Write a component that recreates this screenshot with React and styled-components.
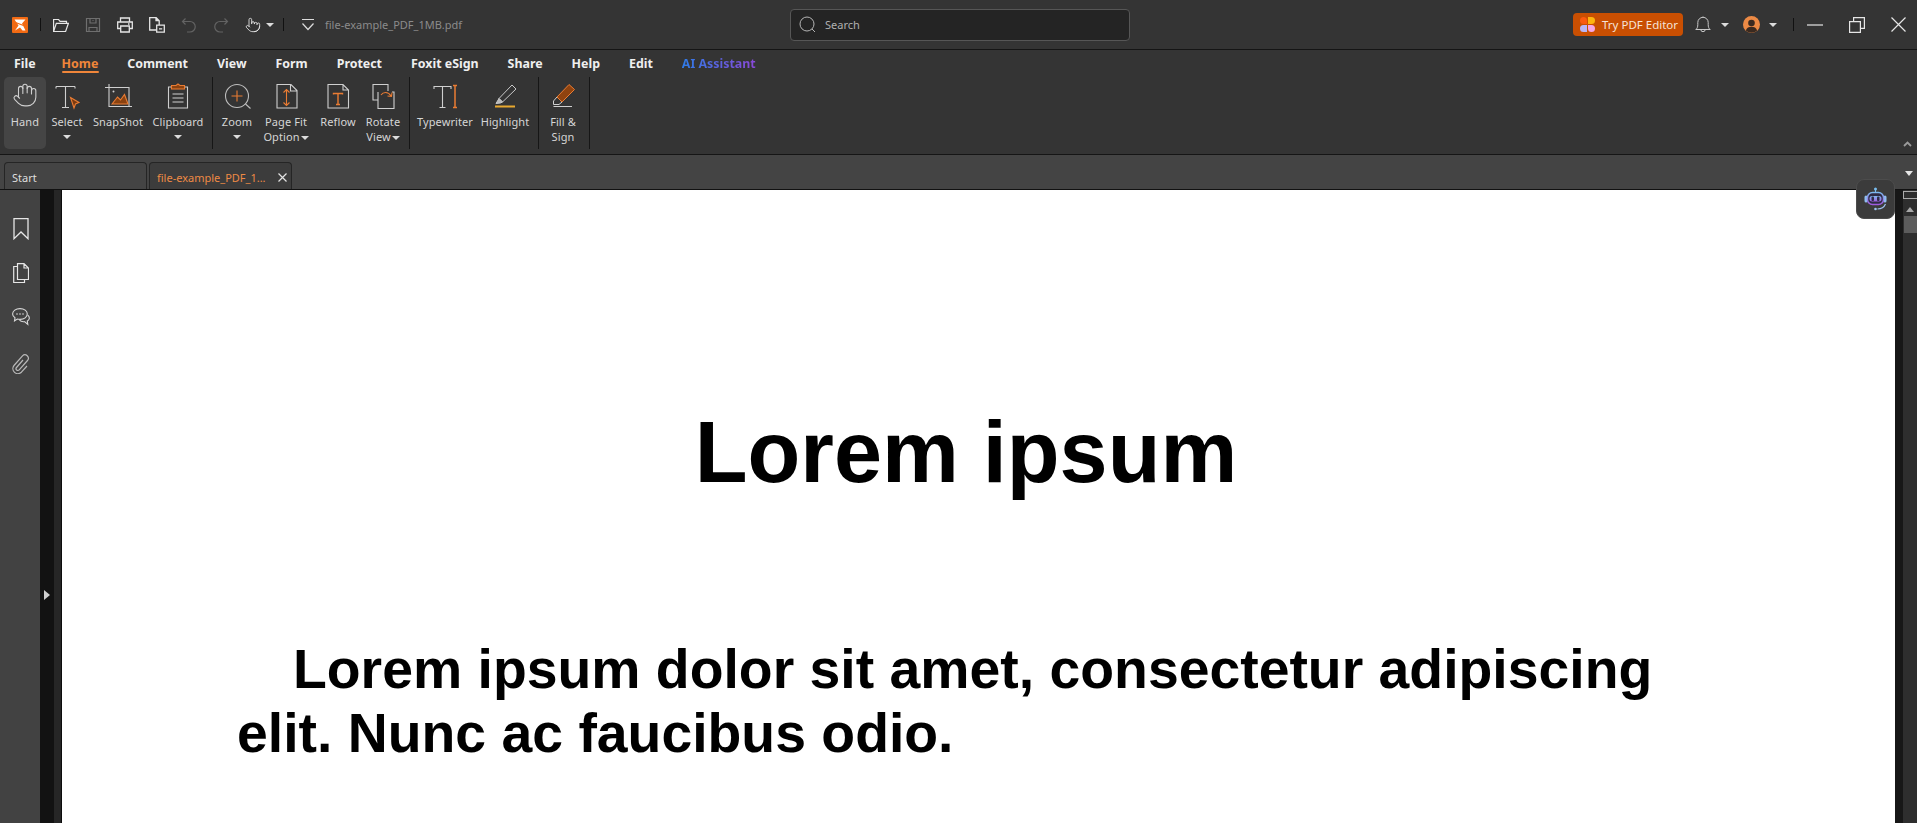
import styled, { createGlobalStyle } from 'styled-components';
import { Hand, Pointer } from 'lucide-react';

const GlobalStyle = createGlobalStyle`
  html, body {
    margin: 0;
    padding: 0;
    background: #333;
  }
  * {
    box-sizing: border-box;
  }
`;

const Window = styled.div`
  width: 1917px;
  height: 823px;
  display: flex;
  flex-direction: column;
  overflow: hidden;
  position: relative;
  font-family: "Noto Sans", "Open Sans", sans-serif;
  color: #e4e4e4;
`;

const TitleBar = styled.header`
  height: 50px;
  flex: none;
  display: grid;
  grid-template-columns: 790px 340px 1fr;
  align-items: center;
  background: #343434;
  border-bottom: 1px solid #151515;
`;

const Cluster = styled.div`
  display: flex;
  align-items: center;
  gap: ${props => props.$gap || 0}px;
  margin-left: ${props => props.$ml || 0}px;
`;

const VSep = styled.span`
  width: 1px;
  height: 13px;
  margin-left: ${props => props.$ml || 0}px;
  background: #111;
`;

const Svg = styled.svg`
  display: block;
  flex: none;
  fill: none;
  stroke: ${props => props.$stroke || '#e6e6e6'};
  stroke-width: ${props => props.$sw || 1.2};
`;

const Caret = styled.span`
  display: inline-block;
  flex: none;
  width: 0;
  height: 0;
  border-left: 4px solid transparent;
  border-right: 4px solid transparent;
  border-top: 4px solid ${props => props.$color || '#dcdcdc'};
`;

const FileName = styled.span`
  font-size: 11px;
  color: #8b8b8b;
`;

const SearchBox = styled.div`
  height: 32px;
  display: flex;
  align-items: center;
  gap: 9px;
  padding-left: 8px;
  background: #242424;
  border: 1px solid #565656;
  border-radius: 4px;
  font-size: 11px;
  color: #b0b0b0;
`;

const TryButton = styled.button`
  width: 110px;
  height: 23px;
  display: flex;
  align-items: center;
  gap: 7px;
  padding: 0 0 0 7px;
  border: none;
  border-radius: 4px;
  background: #c94f02;
  color: #f6e3d6;
  font-family: inherit;
  font-size: 11.5px;
`;

const MenuBar = styled.nav`
  height: 27px;
  flex: none;
  display: flex;
  align-items: flex-start;
  gap: 29px;
  padding: 5px 0 0 14px;
  background: #343434;
`;

const MenuItem = styled.span`
  position: relative;
  font-size: 12.4px;
  font-weight: 700;
  line-height: 17px;
  color: ${props => (props.$active ? '#f0863a' : '#efefef')};
  ${props => props.$active && `
    &::after {
      content: '';
      position: absolute;
      left: 0;
      right: -1px;
      top: 16px;
      height: 2px;
      border-radius: 1px;
      background: #f0863a;
    }
  `}
`;

const FirstMenuItem = styled(MenuItem)`
  margin-right: -3px;
`;

const AiItem = styled(MenuItem)`
  background: linear-gradient(90deg, #2f7be6, #8a48d8);
  -webkit-background-clip: text;
  background-clip: text;
  color: transparent;
`;

const Ribbon = styled.section`
  height: 78px;
  flex: none;
  display: flex;
  align-items: flex-start;
  position: relative;
  padding: 0 0 0 4px;
  background: #343434;
  border-bottom: 1px solid #151515;
`;

const RibbonGroup = styled.div`
  width: ${props => props.$w}px;
  height: 72px;
  flex: none;
  display: flex;
  padding-left: ${props => props.$pl || 0}px;
  border-right: 1px solid #161616;
`;

const RibbonItem = styled.div`
  width: ${props => props.$w}px;
  height: 72px;
  flex: none;
  display: flex;
  flex-direction: column;
  align-items: center;
  padding-top: 5px;
  border-radius: 5px;
  background: ${props => (props.$active ? '#454545' : 'transparent')};
`;

const IconSlot = styled.div`
  height: 32px;
  display: flex;
  justify-content: center;
  color: #cfcfcf;
`;

const Label = styled.div`
  font-size: 11px;
  line-height: 15px;
  letter-spacing: 0.1px;
  text-align: center;
  color: #d6d6d6;
  white-space: nowrap;
`;

const CaretRow = styled.div`
  height: 15px;
  display: flex;
  align-items: center;
  justify-content: center;
`;

const InlineCaret = styled(Caret)`
  margin-left: 1px;
  vertical-align: middle;
`;

const Collapse = styled.span`
  position: absolute;
  right: 5px;
  top: 64px;
  display: flex;
`;

const TabBar = styled.div`
  height: 35px;
  flex: none;
  display: flex;
  align-items: flex-end;
  gap: 2px;
  position: relative;
  padding-left: 4px;
  background: #444;
  border-bottom: 1px solid #111;
`;

const Tab = styled.div`
  width: 143px;
  height: 27px;
  display: flex;
  align-items: center;
  justify-content: space-between;
  padding: 2px 4px 0 7px;
  border: 1px solid #252525;
  border-bottom: none;
  border-radius: 4px 4px 0 0;
  background: ${props => (props.$active ? '#3c3c3c' : '#444')};
  font-size: 11px;
  color: ${props => (props.$active ? '#ed8a45' : '#dedede')};
`;

const TabMenu = styled(Caret)`
  position: absolute;
  right: 4px;
  top: 16px;
  border-left-width: 4.5px;
  border-right-width: 4.5px;
  border-top-width: 5px;
  border-top-color: #e6e6e6;
`;

const Main = styled.main`
  flex: 1;
  min-height: 0;
  display: flex;
`;

const SideBar = styled.aside`
  width: 40px;
  flex: none;
  display: flex;
  flex-direction: column;
  align-items: center;
  padding: 28px 0 0 2px;
  background: #424242;
`;

const SideIcon = styled.div`
  height: ${props => props.$h}px;
  display: flex;
  justify-content: center;
`;

const Gutter = styled.div`
  width: 14px;
  flex: none;
  display: flex;
  align-items: flex-start;
  justify-content: center;
  padding-top: 400px;
  background: #121212;
`;

const GutterArrow = styled.span`
  width: 0;
  height: 0;
  border-top: 5px solid transparent;
  border-bottom: 5px solid transparent;
  border-left: 6px solid #cfcfcf;
`;

const PageEdge = styled.div`
  width: 8px;
  flex: none;
  background: #262626;
  border-right: 1px solid #0c0c0c;
`;

const Page = styled.article`
  flex: 1;
  padding: 213px 180px 0 175px;
  background: #fff;
  color: #000;
  font-family: "Liberation Sans", Arial, sans-serif;
  font-weight: 700;
`;

const Heading = styled.h1`
  margin: 0 20px 0 0;
  font-size: 86.4px;
  line-height: 99px;
  font-weight: 700;
  text-align: center;
`;

const Paragraph = styled.p`
  margin: 135px 0 0;
  font-size: 55.35px;
  line-height: 64px;
  text-indent: 56px;
`;

const Rail = styled.div`
  width: 8px;
  flex: none;
  background: #171717;
`;

const ScrollBar = styled.div`
  width: 14px;
  flex: none;
  display: flex;
  flex-direction: column;
  align-items: center;
  background: #2e2e2e;
`;

const ScrollBox = styled.div`
  width: 14px;
  height: 8px;
  margin-top: 1px;
  border: 1px solid #aaa;
  border-right: none;
`;

const ScrollUp = styled.span`
  margin-top: 8px;
  width: 0;
  height: 0;
  border-left: 4.5px solid transparent;
  border-right: 4.5px solid transparent;
  border-bottom: 5px solid #a8a8a8;
`;

const ScrollThumb = styled.div`
  width: 13px;
  height: 17px;
  margin: 4px 0 0 1px;
  background: #5c5c5c;
`;

const AiBubble = styled.button`
  position: absolute;
  right: 22px;
  top: 179px;
  width: 39px;
  height: 40px;
  display: flex;
  align-items: center;
  justify-content: center;
  padding: 0;
  background: #3b3b3b;
  border: 1px solid #4c4c4c;
  border-radius: 8px;
`;

const Logo = () => (
  <svg width="16" height="16" viewBox="0 0 16 16">
    <rect width="16" height="16" rx="1" fill="#f26a13" />
    <path d="M2.500 2.500h11L10 6.500 13.500 13.500h-3L8 10.500 3 13.500 6.500 8.500z" fill="#fff" />
    <path d="M3.500 5.500l8 3" stroke="#f26a13" strokeWidth="1.300" />
  </svg>
);

const OpenIcon = () => (
  <Svg width="16" height="16" viewBox="0 0 16 16">
    <path d="M.6 14.500V2.500h5l1.500 1.800h6.400v2M.6 14.500h12l2.800-8.200H3.300z" />
  </Svg>
);

const SaveIcon = () => (
  <Svg width="16" height="16" viewBox="0 0 16 16" $stroke="#6f6f6f">
    <path d="M1.500 1.500h13v13h-13zM5 1.500v4.500h6V1.500M7.500 3.500h1M4 14.500v-4h8v4" />
  </Svg>
);

const PrintIcon = () => (
  <Svg width="16" height="16" viewBox="0 0 16 16" $sw="1.300">
    <path d="M3.500 5V1h9v4M3.500 11.500H.7V5h14.600v6.500h-2.800M3.700 9h8.600v6H3.700zM11 7h1.500" />
  </Svg>
);

const DocIcon = () => (
  <Svg width="16" height="16" viewBox="0 0 16 16" $sw="1.300">
    <path d="M7 13H.7V.7h6.500l3 3v4M7 .7v3h3.200M7.700 8.200h7.600v7H7.700zM10 11.800h3.200" />
  </Svg>
);

const UndoIcon = () => (
  <Svg width="16" height="16" viewBox="0 0 16 16" $stroke="#636363">
    <path d="M4.500 1.500L1.500 4.500l3 3M1.500 4.500h7.500a5 5 0 0 1 0 10.500H6" />
  </Svg>
);

const RedoIcon = () => (
  <Svg width="16" height="16" viewBox="0 0 16 16" $stroke="#636363">
    <path d="M11.500 1.500l3 3-3 3M14.500 4.500H7a5 5 0 0 0 0 10.500h3" />
  </Svg>
);

const DownloadIcon = () => (
  <Svg width="16" height="16" viewBox="0 0 16 16" $stroke="#dcdcdc">
    <path d="M2 2.500h12M2.500 6.500L8 12.500l5.500-6" />
  </Svg>
);

const SearchIcon = () => (
  <Svg width="17" height="17" viewBox="0 0 17 17" $stroke="#b5b5b5" $sw="1">
    <circle cx="8" cy="8" r="7" />
    <path d="M13 13l3 3" />
  </Svg>
);

const Petals = () => (
  <svg width="15" height="15" viewBox="0 0 15 15">
    <path d="M0 3.500A3.500 3.500 0 0 1 7 3.500V7H3.500A3.500 3.500 0 0 1 0 3.500z" fill="#fa5a0f" />
    <path d="M8 0h3.500a3.500 3.500 0 0 1 0 7H8z" fill="#fdb40f" />
    <path d="M0 11.500A3.500 3.500 0 0 1 3.500 8H7v7H3.500A3.500 3.500 0 0 1 0 11.500z" fill="#b9b6f5" />
    <path d="M8 8h3.500a3.500 3.500 0 0 1 0 7A3.500 3.500 0 0 1 8 11.500z" fill="#f7a6e6" />
  </svg>
);

const BellIcon = () => (
  <Svg width="16" height="17" viewBox="0 0 16 17" $stroke="#c9c9c9" $sw="1">
    <path d="M.8 13.500c1.500-1.200 2-2.500 2-5V6.500a5.200 5.200 0 0 1 10.400 0v2c0 2.500.5 3.800 2 5zM5.800 13.500a2.200 2.200 0 0 0 4.400 0M8 .5v.8" />
  </Svg>
);

const AvatarIcon = () => (
  <svg width="17" height="17" viewBox="0 0 17 17">
    <circle cx="8.500" cy="8.500" r="8.500" fill="#ec8a45" />
    <circle cx="8.500" cy="7" r="3.300" fill="#3a2a20" />
    <path d="M2.800 14.500c1-2.800 3-3.800 5.700-3.800s4.700 1 5.700 3.800a8.500 8.500 0 0 1-11.400 0z" fill="#3a2a20" />
  </svg>
);

const MinimizeIcon = () => (
  <Svg width="16" height="16" viewBox="0 0 16 16">
    <path d="M0 8h16" />
  </Svg>
);

const RestoreIcon = () => (
  <Svg width="16" height="16" viewBox="0 0 16 16">
    <path d="M.6 4.600h10.800v10.800H.6zM4.600 4.600V.6h10.800v10.800h-4" />
  </Svg>
);

const CloseIcon = () => (
  <Svg width="15" height="15" viewBox="0 0 15 15">
    <path d="M.5.500l14 14M14.500.500l-14 14" />
  </Svg>
);

const SelectIcon = () => (
  <Svg width="32" height="28" viewBox="0 0 32 28" $stroke="#cfcfcf" $sw="1.100">
    <path d="M5 4.500h19M5 4.500v2M24 4.500v2M14.500 4.500v21M11 25.500h7" />
    <path d="M19.500 15.500l8.500 5-3.500 1.500-1.500 4z" fill="#7a3a10" stroke="#ea7c33" />
  </Svg>
);

const SnapShotIcon = () => (
  <Svg width="32" height="28" viewBox="0 0 32 28" $stroke="#cfcfcf" $sw="1.100">
    <path d="M3 5.500h24v19M7 2v22.500h23" />
    <path d="M10 22l5.500-7 3 3 4-5.500 3.500 9.500z" fill="#8a4210" stroke="#ea7c33" />
    <circle cx="11.500" cy="9.500" r="1" fill="#cfcfcf" stroke="none" />
  </Svg>
);

const ClipboardIcon = () => (
  <Svg width="32" height="28" viewBox="0 0 32 28" $stroke="#cfcfcf" $sw="1.100">
    <path d="M9 5H6.500v21h19V5H23M10.500 12h11M10.500 16h11M10.500 20h11" />
    <path d="M9.500 7V3.500h4.500l2-1.500 2 1.500h4.500V7z" fill="#8a4210" stroke="#ea7c33" />
  </Svg>
);

const ZoomIcon = () => (
  <Svg width="32" height="28" viewBox="0 0 32 28" $stroke="#bdbdbd" $sw="1.100">
    <circle cx="16" cy="14" r="11.500" />
    <path d="M24.500 22l5 4.500" />
    <path d="M10.500 14h11M16 8.500v11" stroke="#ea7c33" />
  </Svg>
);

const PageFitIcon = () => (
  <Svg width="32" height="28" viewBox="0 0 32 28" $stroke="#cfcfcf" $sw="1.100">
    <path d="M7 2.500h14l6 6v17.500H7zM20.500 2.500V9h6.500" />
    <path d="M16.500 7.500v16M13.500 10.500l3-3 3 3M13.500 20.500l3 3 3-3" stroke="#ea7c33" />
  </Svg>
);

const ReflowIcon = () => (
  <Svg width="32" height="28" viewBox="0 0 32 28" $stroke="#cfcfcf" $sw="1.100">
    <path d="M6 2.500h15l5.500 5.500v18H6zM21 2.500V8h5.500" />
    <path d="M11.500 12.500v-1h9v1M16 11.500v11M14 22.500h4" stroke="#ea7c33" strokeWidth="1.400" />
  </Svg>
);

const RotateIcon = () => (
  <Svg width="32" height="28" viewBox="0 0 32 28" $stroke="#cfcfcf" $sw="1.100">
    <path d="M11 18H6V2.500h15V9M11 10v16.500h16V10h-2" />
    <path d="M14 13c2-3 7-4 10 1M25 10.500l-.500 4-4-.500" stroke="#ea7c33" />
  </Svg>
);

const TypewriterIcon = () => (
  <Svg width="32" height="28" viewBox="0 0 32 28" $stroke="#cfcfcf" $sw="1.100">
    <path d="M5 7V4.500h17V7M13.500 4.500v21M10.500 25.500h6" />
    <path d="M26 3.500v22M24 3.500h4M24 25.500h4" stroke="#ea7c33" strokeWidth="1.500" />
  </Svg>
);

const HighlightIcon = () => (
  <Svg width="32" height="28" viewBox="0 0 32 28" $stroke="#c9c9c9" $sw="1">
    <path d="M10 16.500L23 3l4 4-13.500 13z" />
    <path d="M10 16.500L7 21.500l4.500-.5 2-1z" fill="#b9b9b9" />
    <path d="M6 24.500h20" stroke="#e8a92f" strokeWidth="2" />
  </Svg>
);

const FillSignIcon = () => (
  <Svg width="32" height="28" viewBox="0 0 32 28" $stroke="#ea7c33" $sw="1">
    <path d="M10 15L22 2.500l5.500 5L15 20z" fill="#8f430f" />
    <path d="M10 15l-3.500 4v3.500H12l3-2.500" stroke="#cfcfcf" />
    <path d="M6.500 24.500H25" stroke="#cfcfcf" />
  </Svg>
);

const BookmarkIcon = () => (
  <Svg width="16" height="22" viewBox="0 0 16 22" $sw="1.300">
    <path d="M1 .7h14v20L8 14l-7 6.700z" />
  </Svg>
);

const PagesIcon = () => (
  <Svg width="16" height="20" viewBox="0 0 16 20" $sw="1.200">
    <path d="M11 16.500h4.500V5L11 .7H4.500v15.800H11M11 .7V5h4.500M4.500 3.500H.7v16h10.800v-3" />
  </Svg>
);

const CommentIcon = () => (
  <Svg width="18" height="18" viewBox="0 0 18 18" $stroke="#d8d8d8" $sw="1.100">
    <path d="M8 .6c4.200 0 7.300 2.400 7.300 5.400S12.200 11.400 8 11.400c-1 0-1.800-.1-2.600-.4L2.500 12.800l.5-3C1.500 8.800.6 7.500.6 6 .6 3 3.800.6 8 .6z" />
    <path d="M15.800 7.200c1.200 1 1.700 2 1.500 3.300-.2 1.100-1 2-2 2.500l.5 3.500-3.300-2.800c-2 .3-3.800-.2-5-1.500" />
    <circle cx="5" cy="6" r=".8" fill="#d8d8d8" stroke="none" />
    <circle cx="8" cy="6" r=".8" fill="#d8d8d8" stroke="none" />
    <circle cx="11" cy="6" r=".8" fill="#d8d8d8" stroke="none" />
  </Svg>
);

const ClipIcon = () => (
  <Svg width="18" height="20" viewBox="0 0 18 20" $stroke="#b9b9b9" $sw="1.200">
    <path d="M11 6L4.500 13.500a1.800 1.800 0 0 0 2.700 2.400L15.500 6.500a3.400 3.400 0 0 0-5-4.600L2 11.500a5 5 0 0 0 7.400 6.700L15 12" />
  </Svg>
);

const TabClose = () => (
  <Svg width="9" height="9" viewBox="0 0 9 9" $stroke="#e2e2e2">
    <path d="M.5.500l8 8M8.500.500l-8 8" />
  </Svg>
);

const CollapseIcon = () => (
  <Svg width="9" height="6" viewBox="0 0 9 6" $stroke="#9a9a9a" $sw="1.800">
    <path d="M1 5l3.500-3.500L8 5" />
  </Svg>
);

const RobotIcon = () => (
  <svg width="26" height="26" viewBox="0 0 26 26" fill="none">
    <defs>
      <linearGradient id="bot" x1="0" y1="0" x2="0" y2="1">
        <stop offset="0" stopColor="#7db8ee" />
        <stop offset="1" stopColor="#a05be0" />
      </linearGradient>
    </defs>
    <circle cx="12.500" cy="3" r="1.500" fill="#79bdf0" />
    <path d="M12.500 4v2.500" stroke="#79bdf0" strokeWidth="1" />
    <rect x="1.500" y="9.500" width="3" height="7" rx="1.500" fill="#8fbdf0" />
    <rect x="20.500" y="9.500" width="3" height="7" rx="1.500" fill="#8fbdf0" />
    <rect x="4.500" y="6.500" width="16" height="12" rx="5" fill="#2e2b45" stroke="url(#bot)" strokeWidth="1.500" />
    <rect x="6.500" y="10" width="12" height="5.500" rx="2.500" fill="url(#bot)" />
    <rect x="8.500" y="10.500" width="2.500" height="4.500" rx="1" fill="#2e2b45" />
    <rect x="14" y="10.500" width="2.500" height="4.500" rx="1" fill="#2e2b45" />
    <path d="M22.500 18c-1.500 3.500-4.500 5-8 5" stroke="#9fc2f2" strokeWidth="1.200" />
    <circle cx="12.500" cy="23" r="1.300" fill="#9fc2f2" />
  </svg>
);

const menuItems = ['Comment', 'View', 'Form', 'Protect', 'Foxit eSign', 'Share', 'Help', 'Edit'];

const ribbonGroups = [
  {
    w: 209,
    pl: 0,
    items: [
      { w: 42, icon: <Hand size={26} strokeWidth={1} />, label: 'Hand', active: true },
      { w: 42, icon: <SelectIcon />, label: 'Select', caret: true },
      { w: 60, icon: <SnapShotIcon />, label: 'SnapShot' },
      { w: 60, icon: <ClipboardIcon />, label: 'Clipboard', caret: true },
    ],
  },
  {
    w: 197,
    pl: 2,
    items: [
      { w: 44, icon: <ZoomIcon />, label: 'Zoom', caret: true },
      { w: 54, icon: <PageFitIcon />, label: 'Page Fit', second: 'Option' },
      { w: 50, icon: <ReflowIcon />, label: 'Reflow' },
      { w: 40, icon: <RotateIcon />, label: 'Rotate', second: 'View' },
    ],
  },
  {
    w: 129,
    pl: 5,
    items: [
      { w: 60, icon: <TypewriterIcon />, label: 'Typewriter' },
      { w: 60, icon: <HighlightIcon />, label: 'Highlight' },
    ],
  },
  {
    w: 51,
    pl: 3,
    items: [{ w: 42, icon: <FillSignIcon />, label: 'Fill &', plain: 'Sign' }],
  },
];

const App = () => {
  return (
    <Window>
      <GlobalStyle />
      <TitleBar>
        <Cluster $gap={12} $ml={12}>
          <Logo />
          <VSep />
          <Cluster $gap={16}>
            <OpenIcon />
            <SaveIcon />
            <PrintIcon />
            <DocIcon />
            <UndoIcon />
            <RedoIcon />
            <Cluster $gap={5}>
              <Pointer size={16} color="#e6e6e6" strokeWidth={1.3} />
              <Caret />
            </Cluster>
          </Cluster>
          <VSep $ml={-3} />
          <Cluster $gap={9} $ml={4}>
            <DownloadIcon />
            <FileName>file-example_PDF_1MB.pdf</FileName>
          </Cluster>
        </Cluster>
        <SearchBox>
          <SearchIcon />
          Search
        </SearchBox>
        <Cluster $ml={443}>
          <TryButton>
            <Petals />
            Try PDF Editor
          </TryButton>
          <Cluster $gap={10} $ml={12}>
            <BellIcon />
            <Caret />
          </Cluster>
          <Cluster $gap={9} $ml={14}>
            <AvatarIcon />
            <Caret />
          </Cluster>
          <VSep $ml={16} />
          <Cluster $gap={26} $ml={13}>
            <MinimizeIcon />
            <RestoreIcon />
            <CloseIcon />
          </Cluster>
        </Cluster>
      </TitleBar>

      <MenuBar>
        <FirstMenuItem>File</FirstMenuItem>
        <MenuItem $active>Home</MenuItem>
        {menuItems.map(item => (
          <MenuItem key={item}>{item}</MenuItem>
        ))}
        <AiItem>AI Assistant</AiItem>
      </MenuBar>

      <Ribbon>
        {ribbonGroups.map((group, index) => (
          <RibbonGroup key={index} $w={group.w} $pl={group.pl}>
            {group.items.map(item => (
              <RibbonItem key={item.label} $w={item.w} $active={item.active}>
                <IconSlot>{item.icon}</IconSlot>
                <Label>{item.label}</Label>
                {item.caret && (
                  <CaretRow>
                    <Caret />
                  </CaretRow>
                )}
                {item.second && (
                  <Label>
                    {item.second}
                    <InlineCaret />
                  </Label>
                )}
                {item.plain && <Label>{item.plain}</Label>}
              </RibbonItem>
            ))}
          </RibbonGroup>
        ))}
        <Collapse>
          <CollapseIcon />
        </Collapse>
      </Ribbon>

      <TabBar>
        <Tab>Start</Tab>
        <Tab $active>
          file-example_PDF_1...
          <TabClose />
        </Tab>
        <TabMenu />
      </TabBar>

      <Main>
        <SideBar>
          <SideIcon $h={45}>
            <BookmarkIcon />
          </SideIcon>
          <SideIcon $h={45}>
            <PagesIcon />
          </SideIcon>
          <SideIcon $h={46}>
            <CommentIcon />
          </SideIcon>
          <SideIcon $h={24}>
            <ClipIcon />
          </SideIcon>
        </SideBar>
        <Gutter>
          <GutterArrow />
        </Gutter>
        <PageEdge />
        <Page>
          <Heading>Lorem ipsum</Heading>
          <Paragraph>Lorem ipsum dolor sit amet, consectetur adipiscing elit. Nunc ac faucibus odio.</Paragraph>
        </Page>
        <Rail />
        <ScrollBar>
          <ScrollBox />
          <ScrollUp />
          <ScrollThumb />
        </ScrollBar>
      </Main>

      <AiBubble>
        <RobotIcon />
      </AiBubble>
    </Window>
  );
};

export default App;
